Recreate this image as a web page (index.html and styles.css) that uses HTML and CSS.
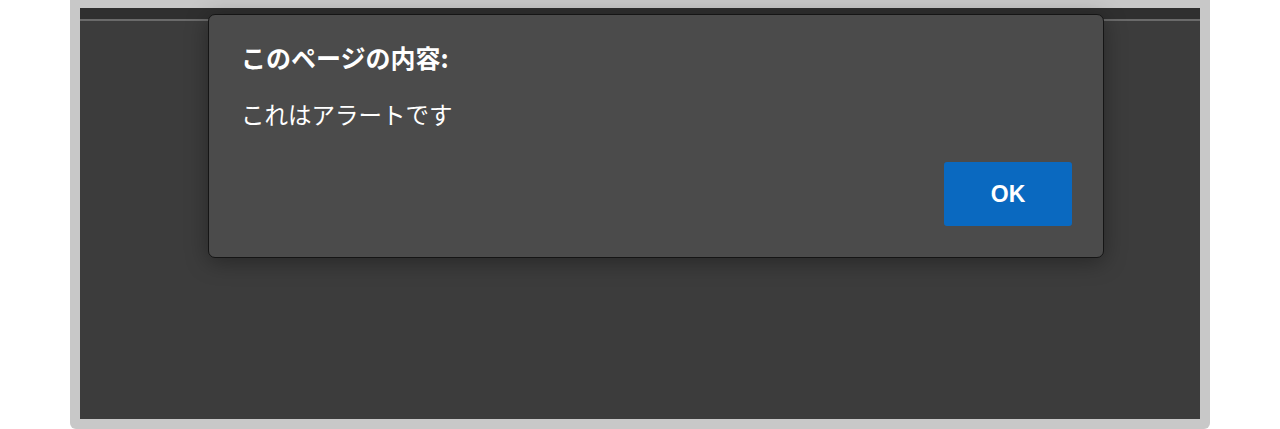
FILE: index.html
```html
<!DOCTYPE html>
<html lang="ja">
<head>
<meta charset="utf-8">
<link rel="stylesheet" href="styles.css">
</head>
<body>
<div class="frame">
  <div class="screen">
    <div class="topbar"></div>
    <div class="dialog">
      <div class="title">このページの内容:</div>
      <div class="message">これはアラートです</div>
      <div class="actions"><button class="ok">OK</button></div>
    </div>
  </div>
</div>
</body>
</html>
```
FILE: styles.css
```css
html, body {
  margin: 0;
  padding: 0;
  background: #ffffff;
}
body {
  width: 1280px;
  height: 429px;
  overflow: hidden;
  font-family: "Noto Sans CJK JP", "Noto Sans", sans-serif;
}
.frame {
  margin-left: 70px;
  width: 1140px;
  height: 429px;
  box-sizing: border-box;
  padding: 8px 10px 10px;
  background: #c8c8c8;
  border-radius: 0 0 6px 6px;
}
.screen {
  position: relative;
  height: 411px;
  background: #3c3c3c;
}
.topbar {
  height: 11px;
  background: #2f2f2f;
  border-bottom: 2px solid #6a6a6a;
}
.dialog {
  position: absolute;
  left: 128px;
  top: 6px;
  width: 896px;
  height: 244px;
  box-sizing: border-box;
  background: #4b4b4b;
  border: 1px solid #151515;
  border-radius: 7px;
  box-shadow: 0 4px 22px rgba(0, 0, 0, 0.35);
  padding: 27px 31px 31px 32px;
  display: flex;
  flex-direction: column;
  color: #ffffff;
}
.title {
  font-size: 25px;
  font-weight: 700;
  line-height: 30px;
  height: 30px;
}
.message {
  margin-top: 27px;
  font-size: 23.5px;
  font-weight: 400;
  line-height: 30px;
  height: 30px;
}
.actions {
  margin-top: auto;
  display: flex;
  justify-content: flex-end;
}
.ok {
  width: 128px;
  height: 64px;
  border: none;
  border-radius: 3px;
  background: #0a69c0;
  color: #ffffff;
  font-family: "Liberation Sans", Arial, sans-serif;
  font-weight: 700;
  font-size: 23px;
  padding: 0;
}
```
